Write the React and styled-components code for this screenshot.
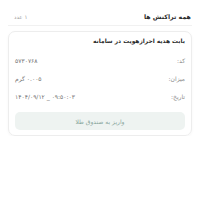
import React from "react";
import styled, { createGlobalStyle } from "styled-components";

const Global = createGlobalStyle`
  html, body { margin: 0; padding: 0; background: #fff; }
  body { font-family: "DejaVu Sans", "Noto Sans", sans-serif; }
`;

const Page = styled.div`
  direction: rtl;
  width: 200px;
  box-sizing: border-box;
  padding: 8px 8px 0 8px;
`;

const Header = styled.div`
  display: flex;
  align-items: center;
  justify-content: space-between;
  height: 17px;
  border-bottom: 1px solid #f1f1f1;
`;

const Title = styled.div`
  font-size: 6.3px;
  font-weight: 700;
  color: #2a2a2a;
  padding-right: 1px;
`;

const Count = styled.div`
  font-size: 5.5px;
  color: #a0a0a0;
  padding-left: 6px;
`;

const Card = styled.div`
  margin-top: 5px;
  border: 1px solid #ededed;
  border-radius: 7px;
  padding: 3px 6px 5px 6px;
  box-shadow: 0 1px 3px rgba(0, 0, 0, 0.04);
`;

const CardTitle = styled.div`
  font-size: 5.9px;
  font-weight: 700;
  color: #2a2a2a;
  height: 12px;
  line-height: 12px;
  margin-bottom: 4px;
`;

const Row = styled.div`
  display: flex;
  justify-content: space-between;
  align-items: center;
  height: 18px;
`;

const Label = styled.span`
  font-size: 6px;
  color: #8a8a8a;
`;

const Value = styled.span`
  font-size: 6px;
  color: #707070;
  direction: ${(p) => (p.$ltr ? "ltr" : "rtl")};
  unicode-bidi: isolate;
`;

const Button = styled.div`
  margin-top: 7px;
  height: 18px;
  border-radius: 5px;
  background: #eef3f1;
  color: #88a69c;
  font-size: 6px;
  display: flex;
  align-items: center;
  justify-content: center;
`;

export default function App() {
  return (
    <>
      <Global />
      <Page>
        <Header>
          <Title>همه تراکنش ها</Title>
          <Count>۱ عدد</Count>
        </Header>
        <Card>
          <CardTitle>بابت هدیه احرازهویت در سامانه</CardTitle>
          <Row>
            <Label>کد:</Label>
            <Value>۵۷۳۰۷۶۸</Value>
          </Row>
          <Row>
            <Label>میزان:</Label>
            <Value>۰.۰۰۵ گرم</Value>
          </Row>
          <Row>
            <Label>تاریخ:</Label>
            <Value $ltr>۱۴۰۴/۰۹/۱۲ _ ۰۹:۵۰:۰۳</Value>
          </Row>
          <Button>واریز به صندوق طلا</Button>
        </Card>
      </Page>
    </>
  );
}
